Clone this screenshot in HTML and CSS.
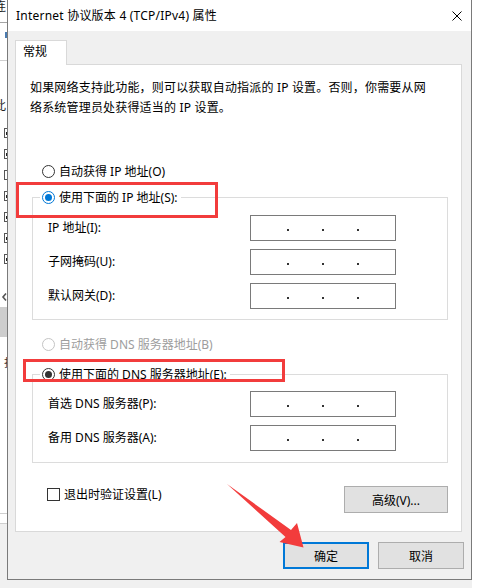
FILE: index.html
```html
<!DOCTYPE html>
<html lang="zh-CN">
<head>
<meta charset="utf-8">
<title>Internet 协议版本 4 (TCP/IPv4) 属性</title>
<link rel="stylesheet" href="styles.css">
</head>
<body>
<div class="screen">
  <div class="behind-left">
    <div class="bl-top"><span class="bl-glyph">连</span></div>
    <div class="bl-line dark"></div>
    <div class="bl-gap h9"></div>
    <div class="bl-blue"></div>
    <div class="bl-gap h22"></div>
    <div class="bl-line"></div>
    <div class="bl-gap h38"></div>
    <div class="bl-text"><span class="bl-glyph">此</span></div>
    <div class="bl-gap h15"></div>
    <div class="bl-checks">
      <span class="bl-check on"></span>
      <span class="bl-check on"></span>
      <span class="bl-check"></span>
      <span class="bl-check on"></span>
      <span class="bl-check on"></span>
      <span class="bl-check on"></span>
      <span class="bl-check on"></span>
    </div>
    <div class="bl-chevron"><svg width="7" height="8" viewBox="0 0 7 8"><path d="M6 0.5L3 4L6 7.5" fill="none" stroke="#555" stroke-width="1.6"/></svg></div>
    <div class="bl-block"></div>
    <div class="bl-text low"><span class="bl-glyph2">找</span></div>
    <div class="bl-fill"></div>
    <div class="bl-line"></div>
    <div class="bl-gap h9"></div>
    <div class="bl-line"></div>
    <div class="bl-bottom"></div>
  </div>

  <div class="dialog">
    <div class="titlebar">
      <span class="title">Internet 协议版本 4 (TCP/IPv4) 属性</span>
      <svg class="close" width="10" height="10" viewBox="0 0 10 10"><path d="M0.5 0.5L9.5 9.5M9.5 0.5L0.5 9.5" stroke="#000" stroke-width="1"/></svg>
    </div>
    <div class="body">
      <div class="tabs"><div class="tab">常规</div></div>
      <div class="panel">
        <p class="desc">如果网络支持此功能，则可以获取自动指派的 IP 设置。否则，你需要从网<br>络系统管理员处获得适当的 IP 设置。</p>

        <div class="radio-row r1"><span class="radio"></span><span>自动获得 IP 地址(O)</span></div>

        <div class="group g1">
          <div class="legend"><span class="radio checked focus"></span><span>使用下面的 IP 地址(S):</span></div>
          <div class="fields f1">
            <span class="flabel">IP 地址(I):</span>
            <div class="ipbox"><i></i><i></i><i></i></div>
            <span class="flabel">子网掩码(U):</span>
            <div class="ipbox"><i></i><i></i><i></i></div>
            <span class="flabel">默认网关(D):</span>
            <div class="ipbox"><i></i><i></i><i></i></div>
          </div>
        </div>

        <div class="radio-row r3 disabled"><span class="radio"></span><span>自动获得 DNS 服务器地址(B)</span></div>

        <div class="group g2">
          <div class="legend"><span class="radio checked"></span><span>使用下面的 DNS 服务器地址(E):</span></div>
          <div class="fields f2">
            <span class="flabel">首选 DNS 服务器(P):</span>
            <div class="ipbox"><i></i><i></i><i></i></div>
            <span class="flabel">备用 DNS 服务器(A):</span>
            <div class="ipbox"><i></i><i></i><i></i></div>
          </div>
        </div>

        <div class="footer-row">
          <label class="check"><span class="checkbox"></span>退出时验证设置(L)</label>
          <button class="btn adv">高级(V)...</button>
        </div>
      </div>
      <div class="actions">
        <button class="btn ok">确定</button>
        <button class="btn">取消</button>
      </div>
    </div>
  </div>

  <div class="behind-right"></div>

  <div class="mark m1"></div>
  <div class="mark m2"></div>
  <svg class="arrow" width="479" height="588" viewBox="0 0 479 588">
    <polygon points="227,484 291,530 297,523 303.5,547.5 279.5,542 285.5,537" fill="#f23c3c"/>
  </svg>
</div>
</body>
</html>
```

FILE: styles.css
```css
html, body {
  margin: 0;
  padding: 0;
}

body {
  width: 479px;
  height: 588px;
  overflow: hidden;
  font-family: "Noto Sans", "Noto Sans CJK SC", sans-serif;
  font-size: 12px;
  color: #000;
}

.screen {
  position: relative;
  display: flex;
  align-items: flex-start;
  width: 479px;
  height: 588px;
  background: #f0f0f0;
}

/* window behind, left edge */
.behind-left {
  width: 7px;
  height: 588px;
  flex: none;
  display: flex;
  flex-direction: column;
  overflow: hidden;
  background: #fff;
}

.bl-top {
  height: 22px;
  overflow: hidden;
}

.bl-glyph {
  display: block;
  margin-left: -6px;
  line-height: 14px;
  font-size: 12px;
  color: #222;
}

.bl-text {
  height: 14px;
  overflow: hidden;
}

.bl-text.low {
  height: 12px;
  margin-top: 20px;
}

.bl-glyph2 {
  display: block;
  margin-left: 4px;
  line-height: 12px;
  font-size: 12px;
  color: #333;
}

.bl-line {
  height: 1px;
  flex: none;
  background: #cfcfcf;
}

.bl-line.dark {
  background: #a5a5a5;
}

.bl-gap {
  flex: none;
}

.h9 { height: 9px; }
.h15 { height: 15px; }
.h22 { height: 22px; }
.h38 { height: 38px; }

.bl-blue {
  height: 6px;
  width: 2px;
  margin-left: 5px;
  background: #4a7bb0;
}

.bl-checks {
  display: flex;
  flex-direction: column;
  gap: 11px;
}

.bl-check {
  display: block;
  width: 8px;
  height: 10px;
  margin-left: 4px;
  box-sizing: border-box;
  border: 1px solid #555;
  background: #fff;
}

.bl-check.on {
  background: linear-gradient(#fff 0 3px, #222 3px 6px, #fff 6px);
  background-size: 3px 100%;
  background-repeat: no-repeat;
  background-position: 1px 0;
}

.bl-chevron {
  height: 8px;
  margin-top: 29px;
  line-height: 0;
}

.bl-block {
  height: 30px;
  margin-top: 6px;
  background: #cdcdcd;
}

.bl-fill {
  flex: 1;
}

.bl-bottom {
  height: 64px;
  background: #f0f0f0;
}

.behind-right {
  width: 7px;
  height: 588px;
  flex: none;
  background: #fff;
}

/* dialog */
.dialog {
  width: 465px;
  height: 580px;
  flex: none;
  box-sizing: border-box;
  border: 1px solid #7a7a7a;
  border-top: none;
  background: #f0f0f0;
  display: flex;
  flex-direction: column;
}

.titlebar {
  height: 31px;
  flex: none;
  background: #fff;
  display: flex;
  align-items: center;
  justify-content: space-between;
  padding: 0 9px 0 8px;
}

.title {
  line-height: 16px;
  letter-spacing: 0.22px;
}

.close {
  display: block;
}

.body {
  flex: 1;
  display: flex;
  flex-direction: column;
  padding: 9px 9px 0 7px;
}

.tabs {
  display: flex;
  height: 24px;
  flex: none;
}

.tab {
  position: relative;
  z-index: 1;
  width: 52px;
  height: 25px;
  box-sizing: border-box;
  border: 1px solid #d9d9d9;
  border-bottom: none;
  background: #fff;
  padding-left: 7px;
  line-height: 22px;
}

.panel {
  width: 447px;
  height: 468px;
  flex: none;
  box-sizing: border-box;
  border: 1px solid #d9d9d9;
  background: #fff;
  display: flex;
  flex-direction: column;
}

.desc {
  margin: 13px 0 0 14px;
  line-height: 20px;
  letter-spacing: 0.18px;
}

.radio-row {
  display: flex;
  align-items: center;
  gap: 4px;
  height: 20px;
  margin-left: 26px;
}

.r1 { margin-top: 43px; }
.r3 { margin-top: 14px; }

.disabled {
  color: #9d9d9d;
}

.disabled .radio {
  border-color: #c4c4c4;
}

.radio {
  width: 13px;
  height: 13px;
  flex: none;
  box-sizing: border-box;
  border: 1px solid #333;
  border-radius: 50%;
  background: #fff;
  display: flex;
  align-items: center;
  justify-content: center;
}

.radio.checked::after {
  content: "";
  width: 7px;
  height: 7px;
  border-radius: 50%;
  background: #333;
}

.radio.focus {
  border-color: #0078d7;
}

.radio.focus::after {
  background: #0078d7;
}

.group {
  margin-left: 16px;
  width: 416px;
  box-sizing: border-box;
  border: 1px solid #dcdcdc;
}

.g1 { margin-top: 16px; }
.g2 { margin-top: 20px; }

.legend {
  display: flex;
  align-items: center;
  gap: 4px;
  width: fit-content;
  height: 20px;
  margin: -11px 0 0 7px;
  padding: 0 3px 0 2px;
  background: #fff;
}

.fields {
  display: grid;
  grid-template-columns: 202px 146px;
  row-gap: 8px;
  align-items: center;
  padding-left: 15px;
}

.f1 { padding-top: 8px; padding-bottom: 10px; }
.f2 { padding-top: 7px; padding-bottom: 11px; }

.flabel {
  line-height: 16px;
}

.ipbox {
  height: 26px;
  box-sizing: border-box;
  border: 1px solid #7a7a7a;
  display: flex;
  align-items: center;
  justify-content: center;
  gap: 33px;
  padding-top: 3px;
}

.ipbox i {
  display: block;
  width: 2px;
  height: 2px;
  background: #333;
}

.footer-row {
  display: flex;
  justify-content: space-between;
  align-items: flex-start;
  width: 401px;
  margin: 23px 0 0 31px;
}

.check {
  display: flex;
  align-items: center;
  gap: 4px;
  height: 13px;
  margin-top: 2px;
  line-height: 13px;
}

.checkbox {
  width: 13px;
  height: 13px;
  flex: none;
  box-sizing: border-box;
  border: 1px solid #333;
  background: #fff;
}

.btn {
  width: 86px;
  height: 27px;
  box-sizing: border-box;
  border: 1px solid #adadad;
  background: #e1e1e1;
  font: inherit;
  color: #000;
  padding: 0;
  margin: 0;
}

.adv {
  width: 104px;
}

.ok {
  border: 2px solid #0078d7;
}

.actions {
  display: flex;
  justify-content: flex-end;
  gap: 9px;
  margin: 10px -2px 0 0;
}

/* annotations */
.mark {
  position: absolute;
  box-sizing: border-box;
  border: 3px solid #f23c3c;
}

.m1 {
  left: 16px;
  top: 182px;
  width: 202px;
  height: 36px;
}

.m2 {
  left: 23px;
  top: 359px;
  width: 262px;
  height: 23px;
}

.arrow {
  position: absolute;
  left: 0;
  top: 0;
  pointer-events: none;
}
```
